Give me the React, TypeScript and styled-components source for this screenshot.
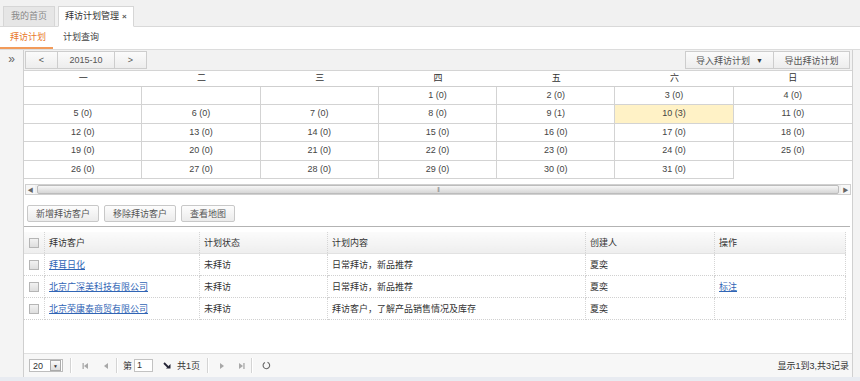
import React from 'react';
import styled, { createGlobalStyle } from 'styled-components';

const GlobalStyle = createGlobalStyle`
  html, body {
    margin: 0;
    padding: 0;
    height: 100%;
    overflow: hidden;
  }
  body {
    font-family: "Liberation Sans", "Noto Sans CJK SC", sans-serif;
    font-size: 9px;
    color: #333;
    background: #fff;
  }
  #root {
    height: 100%;
  }
`;

const Page = styled.div`
  height: 381px;
  display: flex;
  flex-direction: column;
  overflow: hidden;
`;

const TabBar = styled.div`
  height: 26px;
  display: flex;
  align-items: flex-end;
  gap: 3px;
  padding-left: 3px;
  background: #f1f1f1;
  border-bottom: 1px solid #d9d9d9;
`;

const Tab = styled.div<{ $active?: boolean }>`
  height: 19px;
  line-height: 19px;
  padding: 0 ${(p) => (p.$active ? '6px' : '7px')};
  border: 1px solid #d6d6d6;
  border-bottom: ${(p) => (p.$active ? '1px solid #fff' : 'none')};
  margin-bottom: ${(p) => (p.$active ? '-1px' : '0')};
  background: ${(p) => (p.$active ? '#fff' : '#e6e6e6')};
  color: ${(p) => (p.$active ? '#333' : '#888')};
  display: flex;
  align-items: center;
  gap: 3px;
`;

const Close = styled.span`
  font-size: 8px;
  color: #555;
  font-weight: bold;
`;

const SubTabs = styled.div`
  height: 22px;
  display: flex;
  background: #fff;
  border-bottom: 1px solid #dcdcdc;
`;

const SubTab = styled.div<{ $active?: boolean }>`
  padding: 0 7px 0 10px;
  line-height: 20px;
  color: ${(p) => (p.$active ? '#e8782c' : '#444')};
  border-bottom: 2px solid ${(p) => (p.$active ? '#f29b5a' : 'transparent')};
`;

const Body = styled.div`
  flex: 1;
  display: flex;
  min-height: 0;
`;

const LeftRail = styled.div`
  width: 23px;
  background: #f4f4f4;
  border-right: 1px solid #cfcfcf;
  text-align: center;
  padding-top: 2px;
  font-size: 12px;
  color: #666;
`;

const Main = styled.div`
  flex: 1;
  display: flex;
  flex-direction: column;
  background: #fff;
  border-right: 1px solid #d0d0d0;
  min-width: 0;
`;

const RightStrip = styled.div`
  width: 7px;
  background: #f3f3f3;
`;

const CalToolbar = styled.div`
  height: 20px;
  display: flex;
  align-items: center;
  justify-content: space-between;
  padding: 0 2px 0 2px;
  background: #f2f2f2;
  border-bottom: 1px solid #d4d4d4;
`;

const BtnGroup = styled.div`
  display: flex;
`;

const NavBtn = styled.div<{ $w: number }>`
  width: ${(p) => p.$w}px;
  height: 18px;
  box-sizing: border-box;
  display: flex;
  align-items: center;
  justify-content: center;
  gap: 6px;
  border: 1px solid #cdcdcd;
  margin-left: -1px;
  background: linear-gradient(#fbfbfb, #ededed);
  color: #555;
`;

const Caret = styled.span`
  font-size: 7px;
  color: #333;
`;

const CalGrid = styled.div`
  display: grid;
  grid-template-columns: repeat(7, 1fr);
`;

const WeekHead = styled.div`
  height: 15px;
  line-height: 15px;
  text-align: center;
  border-bottom: 1px solid #cfcfcf;
  color: #333;
`;

const DayCell = styled.div<{ $hl?: boolean; $last?: boolean; $blank?: boolean }>`
  height: 17.4px;
  line-height: 17.4px;
  text-align: center;
  color: #444;
  border-bottom: ${(p) => (p.$blank ? 'none' : '1px solid #d3d3d3')};
  border-right: ${(p) => (p.$last || p.$blank ? 'none' : '1px solid #d3d3d3')};
  background: ${(p) => (p.$hl ? '#fff2c6' : '#fff')};
`;

const HScroll = styled.div`
  height: 9px;
  margin: 5px 1px 0 1px;
  display: flex;
  border: 1px solid #d0d0d0;
  background: #f0f0f0;
`;

const ScrollArrow = styled.div`
  width: 9px;
  display: flex;
  align-items: center;
  justify-content: center;
  font-size: 6px;
  color: #666;
  background: #f7f7f7;
`;

const Thumb = styled.div`
  flex: 1;
  margin: 0 2px;
  border: 1px solid #bcbcbc;
  border-radius: 2px;
  background: linear-gradient(#f7f7f7, #d6d6d6);
  display: flex;
  align-items: center;
  justify-content: center;
  font-size: 6px;
  color: #888;
  letter-spacing: -1px;
`;

const ActionBar = styled.div`
  display: flex;
  gap: 5px;
  padding: 10px 0 4px 3px;
  margin-right: 2px;
  border-bottom: 1px solid #b3b3b3;
`;

const Button = styled.div`
  height: 17px;
  box-sizing: border-box;
  padding: 0 8px;
  display: flex;
  align-items: center;
  border: 1px solid #c8c8c8;
  border-radius: 2px;
  background: linear-gradient(#fdfdfd, #ebebeb);
  color: #555;
`;

const GridWrap = styled.div`
  padding-top: 5px;
  flex: 1;
  margin-right: 10px;
`;

const Table = styled.table`
  border-collapse: collapse;
  width: 816px;
  table-layout: fixed;
`;

const Th = styled.th<{ $w: number }>`
  width: ${(p) => p.$w}px;
  height: 21px;
  padding: 0 0 0 4px;
  text-align: left;
  font-weight: normal;
  color: #333;
  background: linear-gradient(#fbfbfb, #eeeeee);
  border-right: 1px dotted #d5d5d5;
  border-bottom: 1px solid #e2e2e2;
`;

const Td = styled.td`
  height: 21px;
  padding: 0 0 0 4px;
  border-right: 1px dotted #d5d5d5;
  border-bottom: 1px dotted #d0d0d0;
  color: #333;
  white-space: nowrap;
  overflow: hidden;
`;

const Link = styled.a`
  color: #3165b5;
  text-decoration: underline;
`;

const Check = styled.span`
  display: inline-block;
  width: 8px;
  height: 8px;
  border: 1px solid #b5b5b5;
  background: linear-gradient(#f2f2f2, #dedede);
  vertical-align: middle;
  margin-left: 1px;
`;

const Pager = styled.div`
  height: 23px;
  display: flex;
  align-items: center;
  padding: 0 3px 0 5px;
  border-top: 1px solid #e0e0e0;
  background: #f7f7f7;
`;

const PageSelect = styled.div`
  width: 34px;
  height: 13px;
  box-sizing: border-box;
  border: 1px solid #bdbdbd;
  background: #fff;
  display: flex;
  align-items: center;
  justify-content: space-between;
  padding-left: 3px;
  color: #333;
`;

const SelectBtn = styled.span`
  width: 9px;
  height: 9px;
  margin-right: 1px;
  border: 1px solid #aaa;
  background: linear-gradient(#fafafa, #dcdcdc);
  display: flex;
  align-items: center;
  justify-content: center;
  font-size: 5px;
`;

const Sep = styled.span<{ $ml: number }>`
  width: 1px;
  height: 15px;
  margin-left: ${(p) => p.$ml}px;
  background: #d4d4d4;
  border-right: 1px solid #fff;
`;

const Icon = styled.span<{ $ml: number }>`
  margin-left: ${(p) => p.$ml}px;
  display: flex;
  align-items: center;
`;

const PText = styled.span<{ $ml: number }>`
  margin-left: ${(p) => p.$ml}px;
  color: #333;
`;

const PageInput = styled.span`
  width: 19px;
  height: 13px;
  box-sizing: border-box;
  margin-left: 2px;
  border: 1px solid #c2c2c2;
  background: #fff;
  padding-left: 2px;
  line-height: 11px;
`;

const Summary = styled.span`
  margin-left: auto;
  color: #333;
`;

const BottomStrip = styled.div`
  height: 4px;
  background: #e8ebf1;
`;

const weekdays = ['一', '二', '三', '四', '五', '六', '日'];

const days: (number | null)[] = [
  null, null, null, 1, 2, 3, 4,
  5, 6, 7, 8, 9, 10, 11,
  12, 13, 14, 15, 16, 17, 18,
  19, 20, 21, 22, 23, 24, 25,
  26, 27, 28, 29, 30, 31, -1,
];

const counts: Record<number, number> = { 9: 1, 10: 3 };

const rows = [
  { name: '拜耳日化', content: '日常拜访，新品推荐', op: '' },
  { name: '北京广深美科技有限公司', content: '日常拜访，新品推荐', op: '标注' },
  { name: '北京荣康泰商贸有限公司', content: '拜访客户，了解产品销售情况及库存', op: '' },
];

const Tri = ({ dir, bar }: { dir: 'l' | 'r'; bar?: 'l' | 'r' }) => (
  <svg width="8" height="8" viewBox="0 0 8 8">
    {dir === 'l' ? <path d="M6 1 L2 4 L6 7 Z" fill="#a8a8a8" /> : <path d="M2 1 L6 4 L2 7 Z" fill="#a8a8a8" />}
    {bar === 'l' && <rect x="0.5" y="1" width="1.3" height="6" fill="#a8a8a8" />}
    {bar === 'r' && <rect x="6.3" y="1" width="1.3" height="6" fill="#a8a8a8" />}
  </svg>
);

function App() {
  return (
    <Page>
      <GlobalStyle />
      <TabBar>
        <Tab>我的首页</Tab>
        <Tab $active>
          拜访计划管理
          <Close>×</Close>
        </Tab>
      </TabBar>
      <SubTabs>
        <SubTab $active>拜访计划</SubTab>
        <SubTab>计划查询</SubTab>
      </SubTabs>
      <Body>
        <LeftRail>»</LeftRail>
        <Main>
          <CalToolbar>
            <BtnGroup>
              <NavBtn $w={33}>&lt;</NavBtn>
              <NavBtn $w={58}>2015-10</NavBtn>
              <NavBtn $w={33}>&gt;</NavBtn>
            </BtnGroup>
            <BtnGroup>
              <NavBtn $w={89}>
                导入拜访计划
                <Caret>▼</Caret>
              </NavBtn>
              <NavBtn $w={77}>导出拜访计划</NavBtn>
            </BtnGroup>
          </CalToolbar>
          <CalGrid>
            {weekdays.map((w) => (
              <WeekHead key={w}>{w}</WeekHead>
            ))}
            {days.map((d, i) => (
              <DayCell
                key={i}
                $hl={d === 10}
                $last={i % 7 === 6}
                $blank={d === -1}
              >
                {d && d > 0 ? `${d} (${counts[d] ?? 0})` : ''}
              </DayCell>
            ))}
          </CalGrid>
          <HScroll>
            <ScrollArrow>◀</ScrollArrow>
            <Thumb>|||</Thumb>
            <ScrollArrow>▶</ScrollArrow>
          </HScroll>
          <ActionBar>
            <Button>新增拜访客户</Button>
            <Button>移除拜访客户</Button>
            <Button>查看地图</Button>
          </ActionBar>
          <GridWrap>
            <Table>
              <thead>
                <tr>
                  <Th $w={16}>
                    <Check />
                  </Th>
                  <Th $w={150}>拜访客户</Th>
                  <Th $w={123}>计划状态</Th>
                  <Th $w={253}>计划内容</Th>
                  <Th $w={124}>创建人</Th>
                  <Th $w={126}>操作</Th>
                </tr>
              </thead>
              <tbody>
                {rows.map((r) => (
                  <tr key={r.name}>
                    <Td>
                      <Check />
                    </Td>
                    <Td>
                      <Link>{r.name}</Link>
                    </Td>
                    <Td>未拜访</Td>
                    <Td>{r.content}</Td>
                    <Td>夏奕</Td>
                    <Td>{r.op && <Link>{r.op}</Link>}</Td>
                  </tr>
                ))}
              </tbody>
            </Table>
          </GridWrap>
          <Pager>
            <PageSelect>
              20
              <SelectBtn>▼</SelectBtn>
            </PageSelect>
            <Sep $ml={7} />
            <Icon $ml={10}>
              <Tri dir="l" bar="l" />
            </Icon>
            <Icon $ml={12}>
              <Tri dir="l" />
            </Icon>
            <Sep $ml={6} />
            <PText $ml={5}>第</PText>
            <PageInput>1</PageInput>
            <Icon $ml={10}>
              <svg width="9" height="9" viewBox="0 0 9 9">
                <path d="M1 2 L5 6" stroke="#223" strokeWidth="1.8" />
                <path d="M7.5 3 L7.5 7.5 L3 7.5 Z" fill="#223" />
              </svg>
            </Icon>
            <PText $ml={5}>共1页</PText>
            <Sep $ml={7} />
            <Icon $ml={9}>
              <Tri dir="r" />
            </Icon>
            <Icon $ml={11}>
              <Tri dir="r" bar="r" />
            </Icon>
            <Sep $ml={6} />
            <Icon $ml={9}>
              <svg width="9" height="9" viewBox="0 0 9 9">
                <path d="M5.5 1.3 A3.3 3.3 0 1 1 3 1.4" fill="none" stroke="#666" strokeWidth="1.1" />
              </svg>
            </Icon>
            <Summary>显示1到3,共3记录</Summary>
          </Pager>
        </Main>
        <RightStrip />
      </Body>
      <BottomStrip />
    </Page>
  );
}

export default App;
